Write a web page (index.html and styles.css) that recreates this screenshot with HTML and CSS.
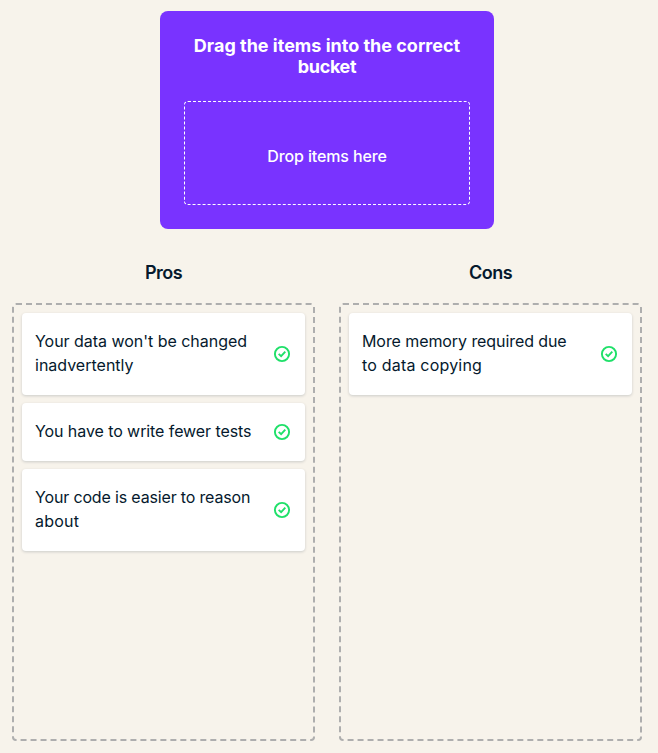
FILE: index.html
```html
<!DOCTYPE html>
<html lang="en">
<head>
<meta charset="utf-8">
<title>Drag the items into the correct bucket</title>
<link rel="stylesheet" href="styles.css">
</head>
<body>
<svg class="defs" aria-hidden="true">
  <symbol id="check" viewBox="0 0 18 18">
    <circle cx="9" cy="9" r="7.1"/>
    <path d="M5.7 8.9l2.4 2.3 4.2-4.5"/>
  </symbol>
</svg>
<main class="exercise">
  <section class="source">
    <h1 class="source-title"><span class="line">Drag the items into the correct</span> <span class="line title-b">bucket</span></h1>
    <div class="dropzone"><span class="drop-label">Drop items here</span></div>
  </section>
  <div class="buckets">
    <section class="bucket">
      <h2 class="bucket-title">Pros</h2>
      <ul class="bucket-list">
        <li class="card"><p class="card-text"><span class="line snug">Your data won't be changed</span> <span class="line">inadvertently</span></p><svg class="icon"><use href="#check"/></svg></li>
        <li class="card"><p class="card-text"><span class="line tight">You have to write fewer tests</span></p><svg class="icon"><use href="#check"/></svg></li>
        <li class="card"><p class="card-text"><span class="line tighter">Your code is easier to reason</span> <span class="line loose">about</span></p><svg class="icon"><use href="#check"/></svg></li>
      </ul>
    </section>
    <section class="bucket">
      <h2 class="bucket-title">Cons</h2>
      <ul class="bucket-list">
        <li class="card"><p class="card-text"><span class="line tight">More memory required due</span> <span class="line loose">to data copying</span></p><svg class="icon"><use href="#check"/></svg></li>
      </ul>
    </section>
  </div>
</main>
</body>
</html>
```
FILE: styles.css
```css
* { box-sizing: border-box; }
body {
  margin: 0;
  min-height: 753px;
  background: #f7f3eb;
  color: #05192d;
  font: 16px/24px Inter, "Noto Sans", sans-serif;
}
h1, h2, p, ul { margin: 0; padding: 0; }
.defs { display: block; width: 0; height: 0; }
.exercise { padding: 11px 16px 12px 12px; }
.source {
  width: 334px;
  height: 218px;
  margin: 0 auto;
  padding: 24px;
  border-radius: 8px;
  background: #7933ff;
  color: #fff;
  text-align: center;
}
.source-title { font-size: 18px; line-height: 21px; font-weight: 700; }
.line { display: block; white-space: nowrap; }
.title-b { letter-spacing: -0.35px; }
.snug { letter-spacing: -0.03px; }
.tight { letter-spacing: -0.08px; }
.tighter { letter-spacing: -0.16px; }
.loose { letter-spacing: 0.2px; }
.dropzone {
  display: flex;
  align-items: center;
  justify-content: center;
  height: 104px;
  margin-top: 24px;
  padding-top: 5px;
  border: 1px dashed #fff;
  border-radius: 4px;
  font-weight: 500;
  letter-spacing: -0.13px;
}
.buckets {
  display: grid;
  grid-template-columns: 1fr 1fr;
  gap: 24px;
  margin-top: 32px;
}
.bucket-title {
  margin-bottom: 18px;
  font-size: 18px;
  line-height: 24px;
  font-weight: 600;
  letter-spacing: -0.5px;
  text-align: center;
}
.bucket-list {
  display: flex;
  flex-direction: column;
  gap: 8px;
  height: 438px;
  padding: 8px;
  border: 2px dashed #aeaeae;
  border-radius: 4px;
  list-style: none;
}
.card {
  display: flex;
  align-items: center;
  justify-content: space-between;
  padding: 16px 14px 18px 13px;
  border-radius: 4px;
  background: #fff;
  box-shadow: 0 1px 3px rgba(5, 25, 45, 0.18);
}
.icon {
  flex: none;
  width: 18px;
  height: 18px;
  margin: 2px 0 0;
  fill: none;
  stroke: #1fe069;
  stroke-width: 1.9;
}
```
